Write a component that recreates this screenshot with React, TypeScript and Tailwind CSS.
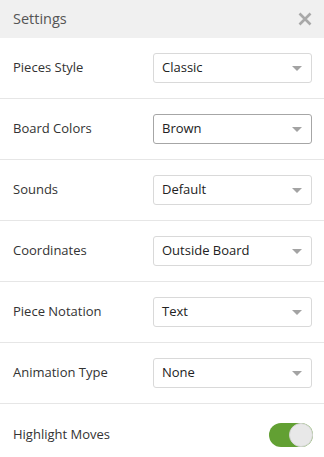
const rows: { label: string; value: string; active?: boolean }[] = [
  { label: 'Pieces Style', value: 'Classic' },
  { label: 'Board Colors', value: 'Brown', active: true },
  { label: 'Sounds', value: 'Default' },
  { label: 'Coordinates', value: 'Outside Board' },
  { label: 'Piece Notation', value: 'Text' },
  { label: 'Animation Type', value: 'None' }
]

function SelectBox({ value, active }: { value: string; active?: boolean }) {
  return (
    <div
      className={`flex h-[30px] w-[159px] items-center justify-between rounded-[3px] border bg-white pl-[8px] pr-[9px] text-[13px] text-[#222] ${
        active ? 'border-[#a6a6a6]' : 'border-[#d9d9d9]'
      }`}
    >
      <span>{value}</span>
      <svg width="10" height="5" viewBox="0 0 10 5">
        <path d="M0 0h10L5 5z" fill="#a3a3a3" />
      </svg>
    </div>
  )
}

export default function App() {
  return (
    <div className="h-[457px] w-[324px] bg-white font-['Open_Sans',sans-serif] text-[#333]">
      <div className="flex h-[38px] items-center justify-between bg-[#f0f0f0] pl-[13px] pr-[12px]">
        <h2 className="text-[14.5px] text-[#555]">Settings</h2>
        <svg width="14" height="14" viewBox="0 0 14 14">
          <path d="M1.5 1.5l11 11M12.5 1.5l-11 11" stroke="#a8a8a8" strokeWidth="2.6" />
        </svg>
      </div>
      {rows.map((row) => (
        <div key={row.label} className="flex h-[61px] items-center justify-between border-b border-[#e6e6e6] pl-[13px] pr-[12px]">
          <span className="text-[13px]">{row.label}</span>
          <SelectBox value={row.value} active={row.active} />
        </div>
      ))}
      <div className="flex h-[61px] items-center justify-between pl-[13px] pr-[11px]">
        <span className="text-[13px]">Highlight Moves</span>
        <div className="flex h-[24px] w-[44px] items-center justify-end rounded-full bg-[#62a033]">
          <div className="h-[24px] w-[24px] rounded-full border border-[#d4d4d4] bg-[#e8e8e8]" />
        </div>
      </div>
    </div>
  )
}
